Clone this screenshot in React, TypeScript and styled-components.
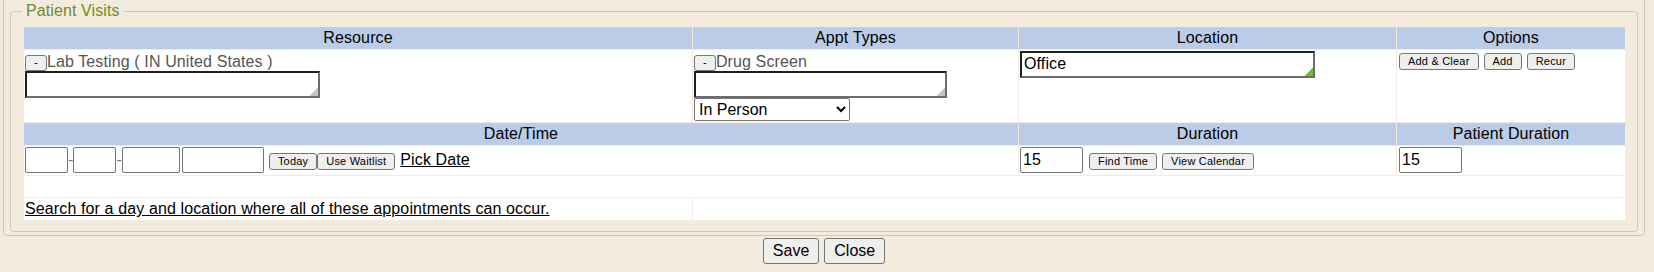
import React from "react";
import styled, { createGlobalStyle } from "styled-components";

const GlobalStyle = createGlobalStyle`
  html, body {
    margin: 0;
    padding: 0;
    background: #f3ecde;
  }
  body {
    font-family: "Liberation Sans", Arial, sans-serif;
    font-size: 16px;
    color: #000;
  }
`;

const Page = styled.div`
  width: 1642px;
  margin-left: 3px;
`;

const Frame = styled.div`
  box-sizing: border-box;
  width: 100%;
  border: 1px solid #c9c9c9;
  border-top: none;
  border-radius: 0 0 4px 4px;
  padding: 2px 6px 3px;
`;

const Group = styled.fieldset`
  margin: 0;
  min-width: 0;
  border: 1px solid #c9c9c9;
  border-radius: 4px;
  padding: 5.6px 11px 10px 12px;
`;

const Legend = styled.legend`
  padding: 0 4px;
  margin-left: -1px;
  color: #6b8e23;
  font-size: 16px;
  letter-spacing: 0.1px;
  font-family: "Liberation Sans", Arial, sans-serif;
`;

const Grid = styled.table`
  table-layout: fixed;
  width: 1603px;
  border-collapse: separate;
  border-spacing: 1px;
  font-family: "Liberation Sans", Arial, sans-serif;
  font-size: 16px;
  letter-spacing: 0.12px;
`;

const Col = styled.col<{ $w: number }>`
  width: ${(p) => p.$w}px;
`;

const Row = styled.tr<{ $h: number }>`
  height: ${(p) => p.$h}px;
`;

const Head = styled.th`
  background: #bbcce8;
  color: #000;
  font-weight: normal;
  text-align: center;
  padding: 0;
  height: 22px;
  box-sizing: border-box;
`;

const Cell = styled.td<{ $valign?: string }>`
  background: #fff;
  padding: 1px;
  box-sizing: border-box;
  vertical-align: ${(p) => p.$valign || "top"};
`;

const ItemHead = styled.div`
  display: flex;
  align-items: flex-start;
  height: 20px;
`;

const ItemLabel = styled.span`
  margin-top: 2px;
  color: #555;
  font-size: 16px;
  white-space: nowrap;
`;

const SmallButton = styled.button<{ $h?: number; $minW?: number }>`
  box-sizing: border-box;
  height: ${(p) => p.$h || 17}px;
  min-width: ${(p) => p.$minW || 0}px;
  margin: 0;
  padding: 0 8px;
  font-family: "Liberation Sans", Arial, sans-serif;
  font-size: 11px;
  letter-spacing: 0.2px;
  line-height: 1;
  color: #000;
  background: #efefef;
  border: 1px solid #767676;
  border-radius: 3px;
  white-space: nowrap;
`;

const RemoveButton = styled(SmallButton)`
  flex: none;
  margin-top: 4px;
`;

const Memo = styled.textarea<{ $w: number; $grip: string }>`
  display: block;
  box-sizing: border-box;
  width: ${(p) => p.$w}px;
  height: 27px;
  margin: 0;
  padding: 2px 2px 0;
  border: 2px solid;
  border-color: #1f1f1f #6d6d6d #6d6d6d #1f1f1f;
  font-family: "Liberation Sans", Arial, sans-serif;
  font-size: 16px;
  letter-spacing: 0.12px;
  color: #000;
  resize: none;
  overflow: hidden;
  outline: none;
  background-color: #fff;
  background-image: linear-gradient(135deg, transparent 50%, ${(p) => p.$grip} 50%);
  background-repeat: no-repeat;
  background-position: right bottom;
  background-size: 8px 8px;
`;

const Picker = styled.select`
  display: block;
  box-sizing: border-box;
  width: 156px;
  height: 23px;
  margin: 0;
  padding: 0;
  font-family: "Liberation Sans", Arial, sans-serif;
  font-size: 16px;
  color: #000;
  background-color: #fff;
  border: 1px solid #767676;
  border-radius: 2px;
`;

const ButtonRow = styled.div`
  display: flex;
  gap: 5px;
  margin: 2px 0 0 1px;
`;

const InlineRow = styled.div`
  display: flex;
  align-items: baseline;
`;

const Field = styled.input<{ $w: number; $ml?: number }>`
  box-sizing: border-box;
  width: ${(p) => p.$w}px;
  height: 26px;
  margin: 0 0 0 ${(p) => p.$ml || 0}px;
  padding: 1px 2px;
  font-family: "Liberation Sans", Arial, sans-serif;
  font-size: 16px;
  color: #000;
  background: #fff;
  border: 1px solid #767676;
  border-radius: 2px;
  outline: none;
`;

const Dash = styled.span`
  color: #777;
  font-size: 16px;
`;

const Spaced = styled.span<{ $ml: number }>`
  display: inline-flex;
  margin-left: ${(p) => p.$ml}px;
`;

const TextLink = styled.a<{ $ml?: number }>`
  margin-left: ${(p) => p.$ml || 0}px;
  color: #000;
  text-decoration: underline;
  font-size: 16px;
  cursor: pointer;
`;

const SearchLink = styled(TextLink)`
  display: inline-block;
  margin-top: 1px;
`;

const Footer = styled.div`
  display: flex;
  justify-content: center;
  gap: 5px;
  margin-top: 2px;
`;

const BigButton = styled.button`
  box-sizing: border-box;
  height: 26px;
  margin: 0;
  padding: 0 9px;
  font-family: "Liberation Sans", Arial, sans-serif;
  font-size: 16px;
  color: #000;
  background: #efefef;
  border: 1px solid #767676;
  border-radius: 3px;
`;

export default function App() {
  return (
    <>
      <GlobalStyle />
      <Page>
        <Frame>
          <Group>
            <Legend>Patient Visits</Legend>
            <Grid>
              <colgroup>
                <Col $w={668} />
                <Col $w={325} />
                <Col $w={377} />
                <Col $w={228} />
              </colgroup>
              <tbody>
                <Row $h={22}>
                  <Head>Resource</Head>
                  <Head>Appt Types</Head>
                  <Head>Location</Head>
                  <Head>Options</Head>
                </Row>
                <Row $h={72}>
                  <Cell>
                    <ItemHead>
                      <RemoveButton $h={16}>-</RemoveButton>
                      <ItemLabel>Lab Testing ( IN United States )</ItemLabel>
                    </ItemHead>
                    <Memo $w={295} $grip="#c4c4c4" />
                  </Cell>
                  <Cell>
                    <ItemHead>
                      <RemoveButton $h={16}>-</RemoveButton>
                      <ItemLabel>Drug Screen</ItemLabel>
                    </ItemHead>
                    <Memo $w={253} $grip="#c4c4c4" />
                    <Picker defaultValue="in-person">
                      <option value="in-person">In Person</option>
                      <option value="virtual">Virtual</option>
                    </Picker>
                  </Cell>
                  <Cell>
                    <Memo $w={295} $grip="#6abf3a" defaultValue="Office" />
                  </Cell>
                  <Cell>
                    <ButtonRow>
                      <SmallButton>Add &amp; Clear</SmallButton>
                      <SmallButton>Add</SmallButton>
                      <SmallButton>Recur</SmallButton>
                    </ButtonRow>
                  </Cell>
                </Row>
                <Row $h={22}>
                  <Head colSpan={2}>Date/Time</Head>
                  <Head>Duration</Head>
                  <Head>Patient Duration</Head>
                </Row>
                <Row $h={29}>
                  <Cell colSpan={2}>
                    <InlineRow>
                      <Field $w={43} />
                      <Dash>-</Dash>
                      <Field $w={43} />
                      <Dash>-</Dash>
                      <Field $w={58} />
                      <Field $w={82} $ml={2} />
                      <Spaced $ml={5}>
                        <SmallButton $minW={48}>Today</SmallButton>
                        <SmallButton>Use Waitlist</SmallButton>
                      </Spaced>
                      <TextLink $ml={5}>Pick Date</TextLink>
                    </InlineRow>
                  </Cell>
                  <Cell>
                    <InlineRow>
                      <Field $w={63} defaultValue="15" />
                      <Spaced $ml={6}>
                        <SmallButton>Find Time</SmallButton>
                      </Spaced>
                      <Spaced $ml={5}>
                        <SmallButton>View Calendar</SmallButton>
                      </Spaced>
                    </InlineRow>
                  </Cell>
                  <Cell>
                    <InlineRow>
                      <Field $w={63} $ml={1} defaultValue="15" />
                    </InlineRow>
                  </Cell>
                </Row>
                <Row $h={21}>
                  <Cell colSpan={4} />
                </Row>
                <Row $h={22}>
                  <Cell $valign="middle">
                    <SearchLink>
                      Search for a day and location where all of these appointments can occur.
                    </SearchLink>
                  </Cell>
                  <Cell colSpan={3} />
                </Row>
              </tbody>
            </Grid>
          </Group>
        </Frame>
        <Footer>
          <BigButton>Save</BigButton>
          <BigButton>Close</BigButton>
        </Footer>
      </Page>
    </>
  );
}
